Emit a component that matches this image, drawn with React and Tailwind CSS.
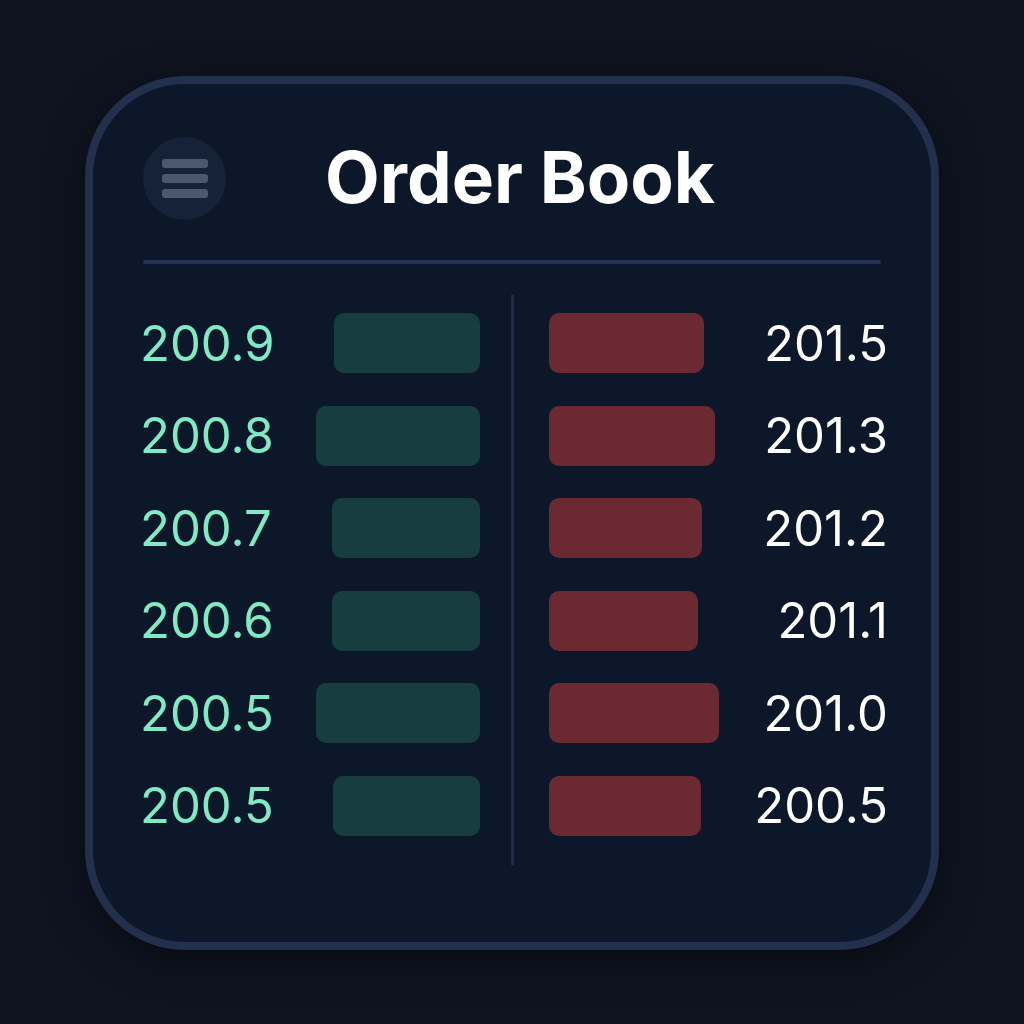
const bids = [
  { price: '200.9', w: 146 },
  { price: '200.8', w: 164 },
  { price: '200.7', w: 148 },
  { price: '200.6', w: 148 },
  { price: '200.5', w: 164 },
  { price: '200.5', w: 147 },
];

const asks = [
  { price: '201.5', w: 155 },
  { price: '201.3', w: 166 },
  { price: '201.2', w: 153 },
  { price: '201.1', w: 149 },
  { price: '201.0', w: 170 },
  { price: '200.5', w: 152 },
];

export default function App() {
  return (
    <div className="w-[1024px] h-[1024px] bg-[#0f1420] flex items-start justify-center pt-[76px]" style={{ fontFamily: 'Inter, "Noto Sans", sans-serif' }}>
      <div className="w-[854px] h-[874px] rounded-[100px] border-[8px] border-[#22304d] bg-[#0c1729] shadow-[0_10px_40px_rgba(0,0,0,0.5)] flex flex-col px-[50px] pt-[45px]">
        {/* header */}
        <div className="flex items-center h-[98px]">
          <button className="w-[83px] h-[83px] rounded-full bg-[#162238] flex flex-col items-center justify-center gap-[6px]">
            <span className="block w-[46px] h-[9px] rounded-[3px] bg-[#4a5970]" />
            <span className="block w-[46px] h-[9px] rounded-[3px] bg-[#4a5970]" />
            <span className="block w-[46px] h-[9px] rounded-[3px] bg-[#4a5970]" />
          </button>
          <h1 className="ml-[99px] -mt-[1px] text-white font-bold text-[71px] leading-none">Order Book</h1>
        </div>
        <div className="mt-[33px] h-[4px] bg-[#243352] rounded-full" />

        {/* book */}
        <div className="flex mt-[31px]">
          <div className="flex-1 flex flex-col pt-[18px] gap-[32.5px]">
            {bids.map((b, i) => (
              <div key={i} className="flex items-center justify-between h-[60px]">
                <span className="text-[#80eac5] text-[49px] leading-none -ml-[3px]">{b.price}</span>
                <div className="h-[60px] rounded-[10px] bg-[#183d40] mr-[31px]" style={{ width: b.w }} />
              </div>
            ))}
          </div>
          <div className="w-[3px] h-[570px] bg-[#1f2c47]" />
          <div className="flex-1 flex flex-col pt-[18px] gap-[32.5px]">
            {asks.map((a, i) => (
              <div key={i} className="flex items-center justify-between h-[60px]">
                <div className="h-[60px] rounded-[10px] bg-[#6b2a32] ml-[35px]" style={{ width: a.w }} />
                <span className="text-white text-[49px] leading-none -mr-[7px]">{a.price}</span>
              </div>
            ))}
          </div>
        </div>
      </div>
    </div>
  );
}
